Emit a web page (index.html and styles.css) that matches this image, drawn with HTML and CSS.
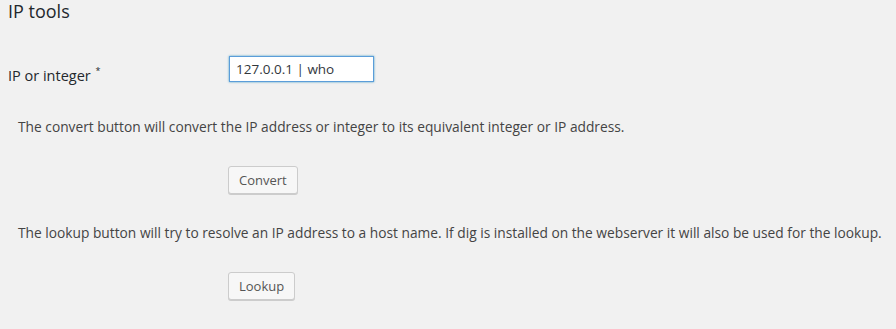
FILE: index.html
```html
<!DOCTYPE html>
<html lang="en">
<head>
  <meta charset="UTF-8">
  <meta name="viewport" content="width=device-width, initial-scale=1">
  <title>IP tools</title>
  <link rel="stylesheet" href="styles.css">
</head>
<body>
  <div class="wrap">
    <h2 class="title">IP tools</h2>

    <div class="tools">
      <div class="field-row">
        <label class="field-label" for="ip-value">IP or integer <span class="required">*</span></label>
        <input class="ip-input" id="ip-value" type="text" value="127.0.0.1 | who">
      </div>

      <p class="note">The convert button will convert the IP address or integer to its equivalent integer or IP address.</p>
      <div class="action-row">
        <button class="button" type="button">Convert</button>
      </div>

      <p class="note">The lookup button will try to resolve an IP address to a host name. If dig is installed on the webserver it will also be used for the lookup.</p>
      <div class="action-row">
        <button class="button" type="button">Lookup</button>
      </div>
    </div>
  </div>
</body>
</html>
```

FILE: styles.css
```css
/* Basic Reset */
* {
  margin: 0;
  padding: 0;
  box-sizing: border-box;
}

body {
  font-family: 'Open Sans', 'Noto Sans', sans-serif;
  font-size: 13px;
  color: #444;
  background: #f1f1f1;
}

.wrap {
  padding: 0 8px;
}

/* Page heading */
.title {
  font-size: 18px;
  font-weight: normal;
  line-height: 22px;
  color: #23282d;
}

.tools {
  display: flex;
  flex-direction: column;
}

/* Label + input row */
.field-row {
  display: flex;
  align-items: flex-start;
  margin-top: 34px;
}
.field-label {
  width: 221px;
  padding-top: 6px;
  font-size: 14.5px;
  line-height: 18px;
  color: #23282d;
}
.required {
  font-size: 9px;
  vertical-align: 7px;
  margin-left: 1px;
}
.ip-input {
  width: 145px;
  height: 26px;
  padding: 0 6px;
  font-family: inherit;
  font-size: 13.5px;
  color: #32373c;
  background: #fff;
  border: 1px solid #5b9dd9;
  box-shadow: 0 0 2px rgba(30, 140, 190, 0.8);
  outline: none;
}

/* Help text */
.note {
  padding-left: 10px;
  font-size: 13.75px;
  line-height: 20px;
  margin-top: 32px;
}

/* Buttons */
.action-row {
  padding-left: 220px;
  margin-top: 29px;
  margin-bottom: 29px;
}
.action-row + .note {
  margin-top: 0;
}
.button {
  height: 28px;
  padding: 0 10px 1px;
  font-family: inherit;
  font-size: 13px;
  line-height: 26px;
  color: #555;
  background: #f7f7f7;
  border: 1px solid #ccc;
  border-radius: 3px;
  box-shadow: 0 1px 0 #ccc;
  cursor: pointer;
}
.button:hover {
  background: #fafafa;
  border-color: #999;
}
```
